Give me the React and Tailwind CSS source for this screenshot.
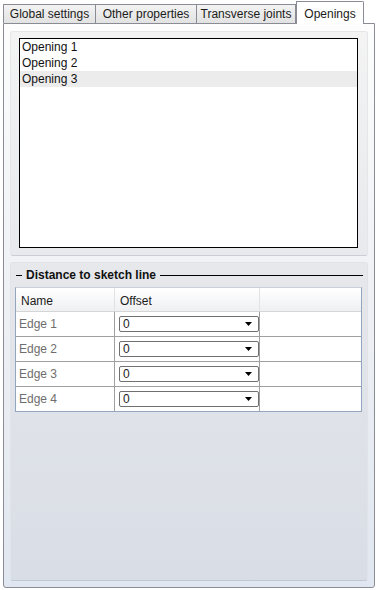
import React from "react";

const tabs = [
  { label: "Global settings", w: "w-[93px]" },
  { label: "Other properties", w: "w-[102px]" },
  { label: "Transverse joints", w: "w-[100px]" },
];

const openings = ["Opening 1", "Opening 2", "Opening 3"];
const edges = ["Edge 1", "Edge 2", "Edge 3", "Edge 4"];

function Combo({ value }) {
  return (
    <div className="flex items-center h-[16px] w-[140px] ml-[4px] mt-[4px] bg-white border border-[#707070] rounded-[2px] pl-[3px] pr-[6px]">
      <span className="flex-1 text-[12px] leading-none text-[#1a1a1a]">{value}</span>
      <svg width="7" height="4" viewBox="0 0 7 4">
        <path d="M0 0 L7 0 L3.5 4 Z" fill="#000" />
      </svg>
    </div>
  );
}

export default function App() {
  return (
    <div
      className="w-[378px] h-[590px] bg-white text-[12px] text-black"
      style={{ fontFamily: '"Liberation Sans", Arial, sans-serif' }}
    >
      {/* tab strip */}
      <div className="flex items-end h-[23px] pl-[3px]">
        {tabs.map((t) => (
          <div
            key={t.label}
            className={`${t.w} h-[19px] flex items-center justify-center border border-b-0 border-[#898c95] bg-gradient-to-b from-[#f3f3f3] to-[#e2e2e2] text-[#1b1b1b] -mr-px`}
          >
            {t.label}
          </div>
        ))}
        <div className="relative z-10 w-[68px] h-[23px] -mb-px ml-[1px] flex items-start justify-center pt-[3px] border border-b-0 border-[#898c95] bg-white rounded-tr-[2px] text-[#1b1b1b]">
          Openings
        </div>
      </div>

      {/* panel */}
      <div className="ml-[3px] w-[372px] h-[565px] border border-[#898c95] rounded-b-[3px] bg-gradient-to-b from-[#fdfdfd] via-[#eef0f4] to-[#e1e7f0] pt-[7px] px-[6px] flex flex-col gap-[6px]">
        {/* openings group */}
        <div className="h-[225px] rounded-[3px] border border-[#e4e6ea] border-b-[#c9ced6] bg-[#00000009] pt-[6px] pl-[8px]">
          <div className="w-[339px] h-[210px] border border-black bg-white">
            {openings.map((o, i) => (
              <div
                key={o}
                className={`h-[16px] leading-[16px] pl-[2px] text-[#111] ${i === 2 ? "bg-[#ececec]" : ""}`}
              >
                {o}
              </div>
            ))}
          </div>
        </div>

        {/* distance group */}
        <div className="h-[319px] rounded-[3px] border border-[#e0e3e8] border-b-[#c3c9d2] bg-[#0000000a] pl-[4px] pr-[4px]">
          <div className="flex items-center h-[24px]">
            <div className="w-[6px] h-px bg-black ml-px" />
            <span className="px-[4px] font-bold text-[#111]">Distance to sketch line</span>
            <div className="flex-1 h-px bg-black" />
          </div>
          <div className="w-[347px] border border-[#93a6c0] border-t-[#c8cfd9] bg-white">
            <div className="flex h-[24px] border-b border-[#d5d5d5] bg-gradient-to-b from-white to-[#eff0f2] text-[#1b1b1b]">
              <div className="w-[99px] pl-[5px] pt-[4px] border-r border-[#e2e2e2]">Name</div>
              <div className="w-[145px] pl-[5px] pt-[4px] border-r border-[#e2e2e2]">Offset</div>
              <div className="flex-1" />
            </div>
            {edges.map((e, i) => (
              <div
                key={e}
                className={`flex ${i < edges.length - 1 ? "h-[25px] border-b border-[#a0a0a0]" : "h-[24px]"}`}
              >
                <div className="w-[99px] pl-[3px] pt-[3px] text-[#6d6d6d] border-r border-[#a0a0a0]">{e}</div>
                <div className="w-[145px] border-r border-[#a0a0a0]">
                  <Combo value="0" />
                </div>
                <div className="flex-1" />
              </div>
            ))}
          </div>
        </div>
      </div>
    </div>
  );
}
